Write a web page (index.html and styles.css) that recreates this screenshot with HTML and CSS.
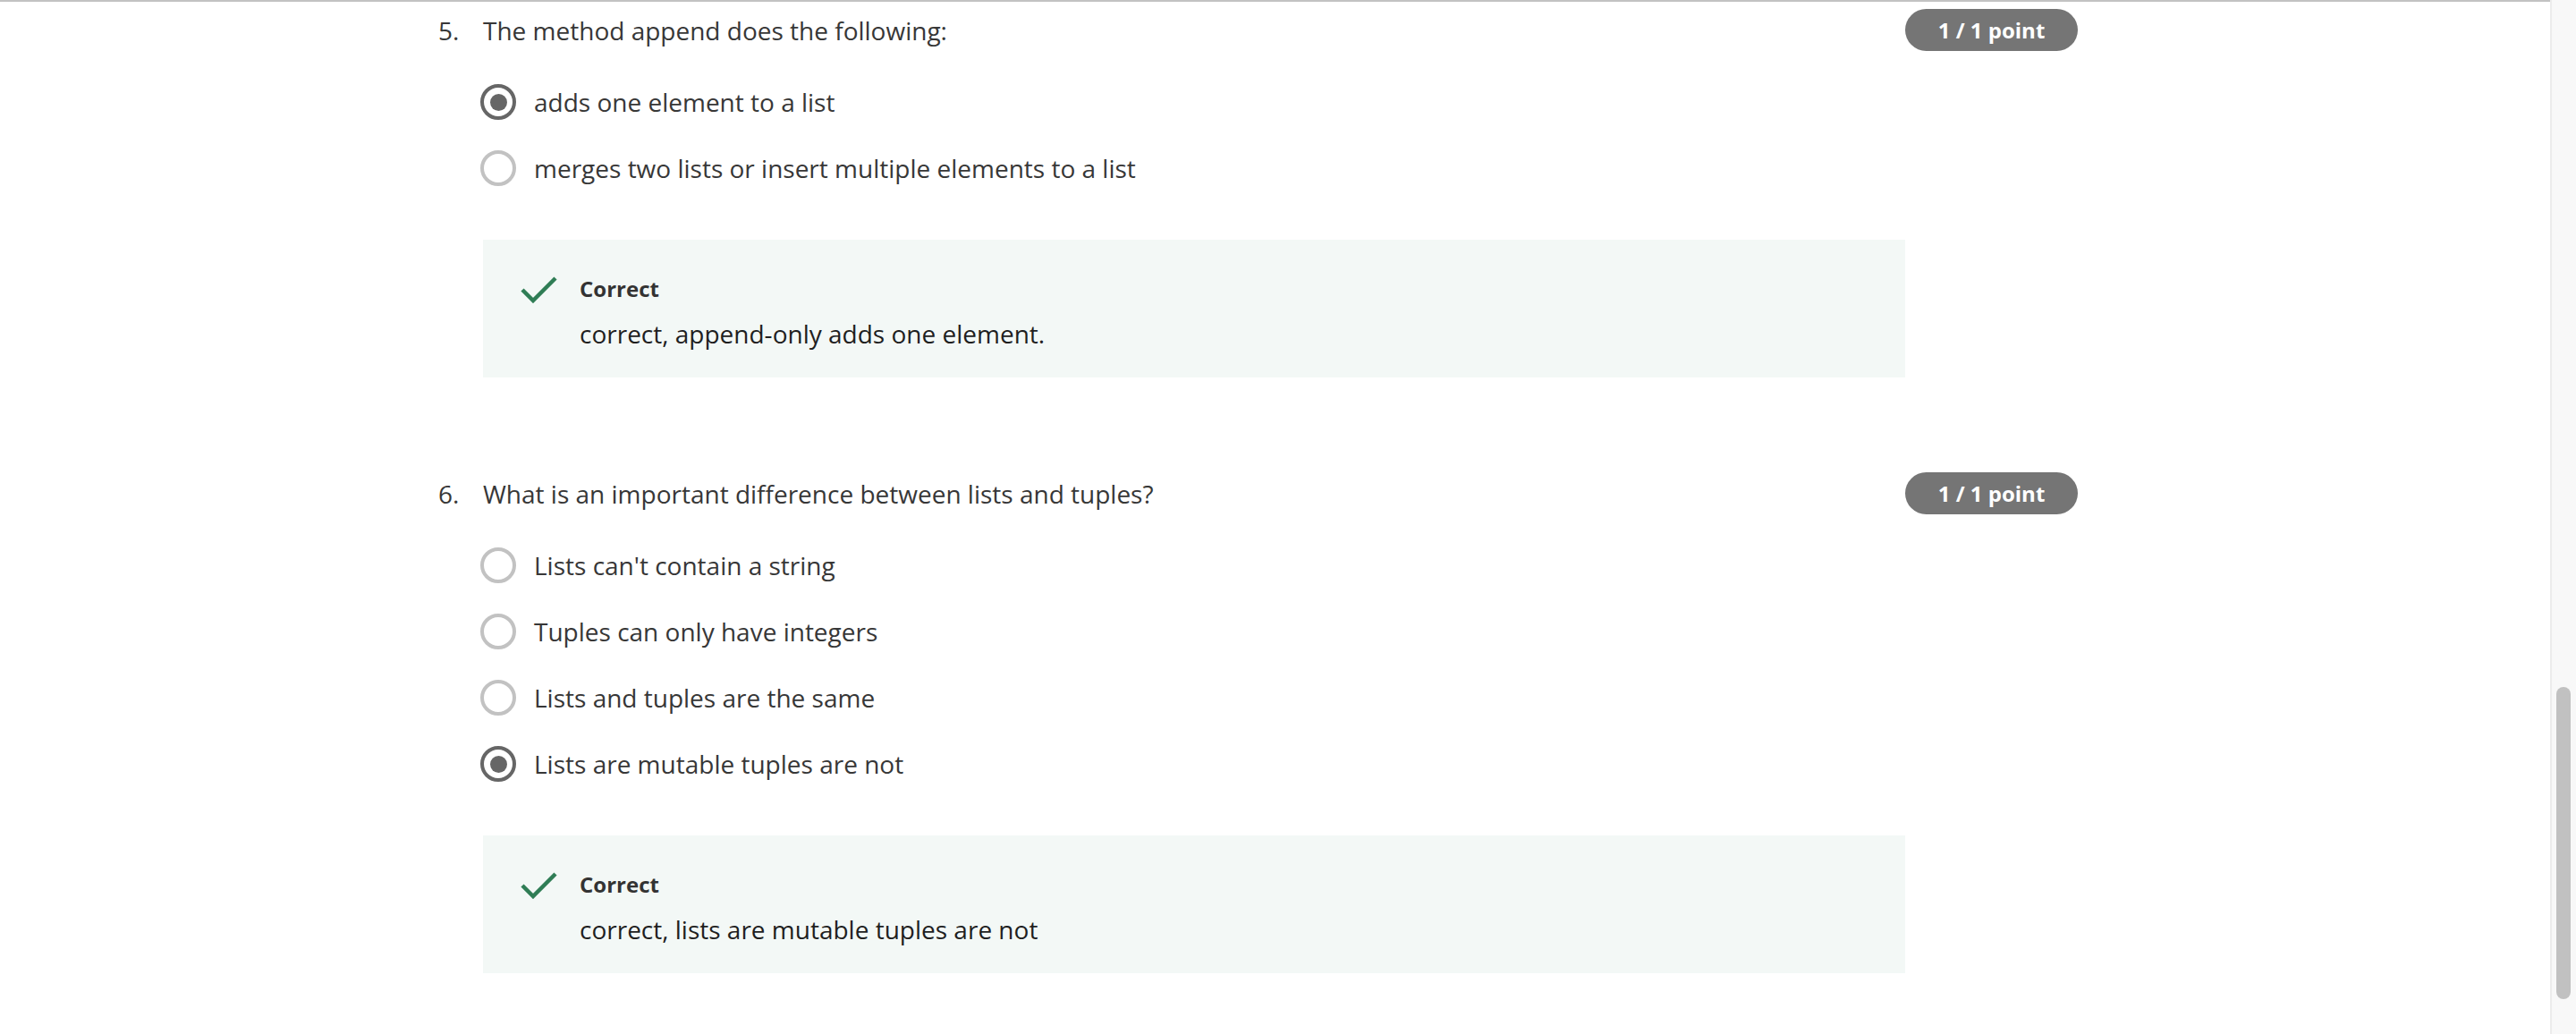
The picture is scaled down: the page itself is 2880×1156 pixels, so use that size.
FILE: index.html
```html
<!DOCTYPE html>
<html lang="en">
<head>
<meta charset="utf-8">
<title>Quiz</title>
<link rel="stylesheet" href="styles.css">
</head>
<body>
<div class="frame">
  <main class="main">
    <div class="topline"></div>
    <div class="questions">
      <section class="question">
        <div class="q-head">
          <span class="q-num">5.</span>
          <span class="q-text">The method append does the following:</span>
          <span class="badge">1 / 1 point</span>
        </div>
        <div class="options">
          <div class="option"><span class="radio checked"></span><span class="opt-text">adds one element to a list</span></div>
          <div class="option"><span class="radio"></span><span class="opt-text">merges two lists or insert multiple elements to a list</span></div>
        </div>
        <div class="feedback">
          <svg class="check" width="41" height="31" viewBox="0 0 41 31"><polyline points="2,16 14,28 39,3" fill="none" stroke="#2f7d55" stroke-width="4.5"/></svg>
          <div class="fb-body">
            <div class="fb-title">Correct</div>
            <div class="fb-text">correct, append-only adds one element.</div>
          </div>
        </div>
      </section>
      <section class="question">
        <div class="q-head">
          <span class="q-num">6.</span>
          <span class="q-text">What is an important difference between lists and tuples?</span>
          <span class="badge">1 / 1 point</span>
        </div>
        <div class="options">
          <div class="option"><span class="radio"></span><span class="opt-text">Lists can't contain a string</span></div>
          <div class="option"><span class="radio"></span><span class="opt-text">Tuples can only have integers</span></div>
          <div class="option"><span class="radio"></span><span class="opt-text">Lists and tuples are the same</span></div>
          <div class="option"><span class="radio checked"></span><span class="opt-text">Lists are mutable tuples are not</span></div>
        </div>
        <div class="feedback">
          <svg class="check" width="41" height="31" viewBox="0 0 41 31"><polyline points="2,16 14,28 39,3" fill="none" stroke="#2f7d55" stroke-width="4.5"/></svg>
          <div class="fb-body">
            <div class="fb-title">Correct</div>
            <div class="fb-text">correct, lists are mutable tuples are not</div>
          </div>
        </div>
      </section>
    </div>
  </main>
  <div class="scrollbar"><div class="thumb"></div></div>
</div>
</body>
</html>
```
FILE: styles.css
```css
html, body {
  margin: 0;
  padding: 0;
  background: #ffffff;
}
body {
  font-family: "Open Sans", "Liberation Sans", sans-serif;
  color: #333333;
  width: 2880px;
  height: 1156px;
  overflow: hidden;
}
.frame {
  display: flex;
  height: 1156px;
}
.main {
  flex: 1;
  min-width: 0;
}
.topline {
  height: 2px;
  background: #c2c2c2;
}
.questions {
  padding-top: 8px;
  margin-left: 490px;
  width: 1833px;
  display: flex;
  flex-direction: column;
  gap: 106px;
}
.q-head {
  display: flex;
  align-items: center;
  height: 47px;
}
.q-num {
  width: 50px;
  font-size: 28px;
  color: #373737;
}
.q-text {
  width: 1590px;
  font-size: 28px;
  color: #373737;
}
.badge {
  width: 193px;
  height: 47px;
  border-radius: 24px;
  background: #757575;
  color: #ffffff;
  font-weight: 700;
  font-size: 24px;
  display: flex;
  align-items: center;
  justify-content: center;
}
.options {
  margin-top: 37px;
  margin-left: 47px;
  display: flex;
  flex-direction: column;
  gap: 34px;
}
.option {
  display: flex;
  align-items: center;
  height: 40px;
  gap: 20px;
}
.radio {
  box-sizing: border-box;
  width: 40px;
  height: 40px;
  border-radius: 50%;
  border: 4px solid #c2c2c2;
  display: flex;
  align-items: center;
  justify-content: center;
  flex: none;
}
.radio.checked {
  border-color: #666666;
}
.radio.checked::after {
  content: "";
  width: 19px;
  height: 19px;
  border-radius: 50%;
  background: #666666;
}
.opt-text {
  font-size: 28px;
  color: #373737;
}
.feedback {
  margin-top: 60px;
  margin-left: 50px;
  width: 1590px;
  height: 154px;
  box-sizing: border-box;
  background: #f3f8f6;
  padding: 40px 0 0 42px;
  display: flex;
  gap: 25px;
}
.check {
  flex: none;
}
.fb-title {
  font-size: 24px;
  font-weight: 700;
  line-height: 32px;
  margin-top: -1px;
  color: #333333;
}
.fb-text {
  font-size: 28px;
  line-height: 40px;
  margin-top: 14px;
  color: #1f1f1f;
}
.scrollbar {
  width: 27px;
  flex: none;
  background: #f8f8f8;
  border-left: 2px solid #ececec;
  box-sizing: content-box;
}
.thumb {
  margin-top: 768px;
  margin-left: 5px;
  width: 16px;
  height: 349px;
  border-radius: 8px;
  background: #c1c1c1;
}
```
